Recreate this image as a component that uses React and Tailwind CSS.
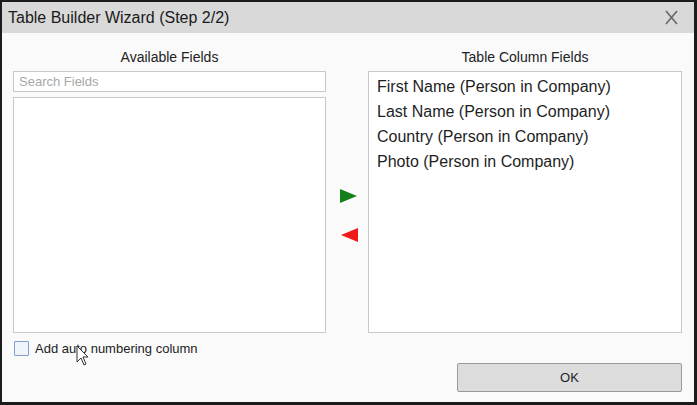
import React from 'react';

const fieldRows = [
    'First Name (Person in Company)',
    'Last Name (Person in Company)',
    'Country (Person in Company)',
    'Photo (Person in Company)',
];

const App = () => {
    return (
        <div className="w-[697px] h-[405px] bg-white font-['Liberation_Sans',Arial,sans-serif]">
            <div className="w-full h-full flex flex-col bg-[#fafafa] border-t-2 border-l-2 border-r-[3px] border-b-[3px] border-[#1c1c1c] relative">
                {/* Title bar */}
                <div className="h-[31px] bg-[#d9d9d9] flex items-center justify-between pl-[6px] pr-[16px]">
                    <span className="text-[16px] text-[#1a1a1a]">Table Builder Wizard (Step 2/2)</span>
                    <svg width="13" height="15" viewBox="0 0 13 15">
                        <path d="M1 1 L12 14 M12 1 L1 14" stroke="#6a6a6a" strokeWidth="1.7" fill="none" />
                    </svg>
                </div>

                {/* Body */}
                <div className="flex-1 pl-[11px] pr-[12px] pt-[16px]">
                    <div className="flex">
                        {/* Left column */}
                        <div className="w-[313px] flex flex-col">
                            <div className="h-[16px] leading-[16px] text-center text-[14px] text-[#222]">Available Fields</div>
                            <div className="mt-[6px] h-[21px] border border-[#c9c9c9] bg-white flex items-center px-[5px] text-[13px] text-[#a8a8a8]">
                                Search Fields
                            </div>
                            <div className="mt-[5px] h-[236px] border border-[#c9c9c9] bg-white"></div>
                            <div className="mt-[8px] h-[15px] flex items-center gap-[6px] pl-[1px]">
                                <div className="w-[15px] h-[15px] border border-[#7f9fd0] bg-[#f0f4fb] rounded-[1px]"></div>
                                <span className="text-[13px] text-[#222]">Add auto numbering column</span>
                            </div>
                        </div>

                        {/* Arrows */}
                        <div className="w-[42px] flex flex-col items-center pt-[140px] gap-[25px]">
                            <svg width="17" height="14" viewBox="0 0 17 14" className="ml-[2px]">
                                <path d="M0 0 L17 7 L0 14 Z" fill="#13801a" />
                            </svg>
                            <svg width="17" height="14" viewBox="0 0 17 14" className="ml-[4px]">
                                <path d="M17 0 L0 7 L17 14 Z" fill="#f01818" />
                            </svg>
                        </div>

                        {/* Right column */}
                        <div className="w-[314px] flex flex-col">
                            <div className="h-[16px] leading-[16px] text-center text-[14px] text-[#222]">Table Column Fields</div>
                            <div className="mt-[6px] h-[262px] border border-[#c9c9c9] bg-white pt-[2px] pl-[8px]">
                                {fieldRows.map((row) => (
                                    <div key={row} className="leading-[25px] text-[16px] text-[#1e1e1e]">{row}</div>
                                ))}
                            </div>
                        </div>
                    </div>

                    <div className="flex justify-end mt-[7px]">
                        <button className="w-[225px] h-[29px] bg-[#dcdcdc] border border-[#9a9a9a] rounded-[2px] text-[13px] text-[#222]">
                            OK
                        </button>
                    </div>
                </div>

                {/* Mouse cursor */}
                <svg className="absolute left-[74px] top-[343px]" width="14" height="22" viewBox="0 0 14 22">
                    <path d="M1 1 L1 17 L5 13 L8 20 L10 19 L7 12 L12 12 Z" fill="#ffffff" stroke="#333" strokeWidth="1" strokeLinejoin="round" />
                </svg>
            </div>
        </div>
    );
};

export default App;
